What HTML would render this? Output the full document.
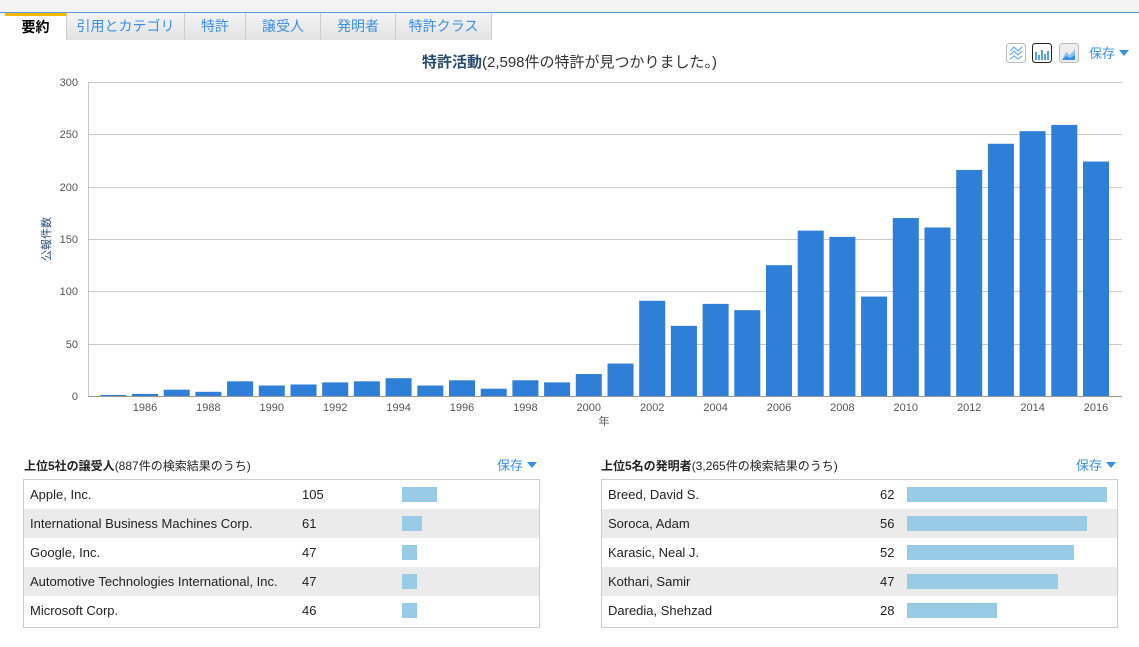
<!DOCTYPE html>
<html><head><meta charset="utf-8">
<style>
body{margin:0;width:1139px;height:647px;background:#fff;font-family:"Liberation Sans","Noto Sans CJK JP",sans-serif;position:relative;overflow:hidden}
.topband{position:absolute;left:0;top:0;width:1139px;height:12px;background:#f3f3f3;border-bottom:1px solid #5a9be0}
.tabs{position:absolute;left:5px;top:13px;height:27px;border-bottom:1px solid #ccc}
.tab{position:absolute;top:0;height:27px;line-height:26px;text-align:center;font-size:14px;color:#3a8ee6;background:linear-gradient(#f4f4f4,#e2e2e2);border-right:1px solid #ccc;box-sizing:border-box}
.tab.on{background:#fff;color:#000;font-weight:bold;border-top:3px solid #f5b800;line-height:22px}
.abs{position:absolute}
.title{left:0;width:1139px;top:51px;text-align:center;font-size:15px;color:#333}
.title b{color:#274b6d}
.save{font-size:13px;color:#3a8ee6}
.tri{display:inline-block;width:0;height:0;border-left:5px solid transparent;border-right:5px solid transparent;border-top:6px solid #3a8ee6;margin-left:4px;vertical-align:2px}
.box{position:absolute;border:1px solid #ccc;width:515px;top:479px;height:147px;font-size:13px;color:#222}
.row{height:29px;line-height:29px;position:relative}
.row.g{background:#ebebeb}
.row span{position:absolute}
.bar{position:absolute;top:7px;height:15px;background:#99cbe6}
.hd{font-size:12px;color:#222;top:457px}
.hd b{font-size:12px}
</style></head><body>
<div class="topband"></div>
<div class="tabs">
<div class="tab on" style="left:0;width:62px">要約</div>
<div class="tab" style="left:62px;width:118px">引用とカテゴリ</div>
<div class="tab" style="left:180px;width:61px">特許</div>
<div class="tab" style="left:241px;width:75px">譲受人</div>
<div class="tab" style="left:316px;width:75px">発明者</div>
<div class="tab" style="left:391px;width:96px">特許クラス</div>
</div>
<div class="abs title"><b>特許活動</b>(2,598件の特許が見つかりました。)</div>
<svg class="abs" style="left:1006px;top:43px" width="76" height="20">
<rect x="0.5" y="0.5" width="19" height="19" rx="3" fill="#fff" stroke="#bbb"/>
<path d="M4 8l4-4 4 4 4-4M4 12l4-4 4 4 4-4M4 16l4-3 4 3 4-3" stroke="#5aa0e8" fill="none"/>
<rect x="26.5" y="0.5" width="19" height="19" rx="3" fill="#fff" stroke="#222"/>
<path d="M30 17v-8M33 17v-5M36 17v-10M39 17v-6M42 17v-9" stroke="#5aa0e8" stroke-width="2"/>
<rect x="53.5" y="0.5" width="19" height="19" rx="3" fill="#eee" stroke="#bbb"/>
<path d="M56 17l4-8 4 3 5-6v11z" fill="#8cc0f0"/><path d="M56 17l4-4 4 2 5-3v5z" fill="#3a8ee6"/>
</svg>
<div class="abs save" style="left:1089px;top:43px">保存<span class="tri"></span></div>
<svg class="abs" style="left:0;top:70px" width="1139" height="370" id="ch">
<g stroke="#c8c8c8" stroke-width="1">
<line x1="88" x2="1122" y1="12.5" y2="12.5"/><line x1="88" x2="1122" y1="64.5" y2="64.5"/>
<line x1="88" x2="1122" y1="117.5" y2="117.5"/><line x1="88" x2="1122" y1="169.5" y2="169.5"/>
<line x1="88" x2="1122" y1="221.5" y2="221.5"/><line x1="88" x2="1122" y1="274.5" y2="274.5"/>
<line x1="88.5" x2="88.5" y1="12" y2="326"/>
</g>
<line x1="88" x2="1122" y1="326.5" y2="326.5" stroke="#999"/>
<g font-size="11" fill="#555" text-anchor="end">
<text x="78" y="16">300</text><text x="78" y="68">250</text><text x="78" y="121">200</text>
<text x="78" y="173">150</text><text x="78" y="225">100</text><text x="78" y="278">50</text><text x="78" y="330">0</text>
</g>
<text transform="translate(50,169) rotate(-90)" font-size="11" fill="#274b6d" text-anchor="middle">公報件数</text>
<text x="604" y="355" font-size="11" fill="#555" text-anchor="middle">年</text>
<g id="bars" fill="#2f7ed8"></g>
<g id="xl" font-size="11" fill="#555" text-anchor="middle"></g>
</svg>
<script>
var v=[1,2,6,4,14,10,11,13,14,17,10,15,7,15,13,21,31,91,67,88,82,125,158,152,95,170,161,216,241,253,259,224];
var b=document.getElementById('bars'),xl=document.getElementById('xl'),ns='http://www.w3.org/2000/svg';
for(var i=0;i<v.length;i++){var cx=113.3+i*31.7,h=v[i]*314/300;
var r=document.createElementNS(ns,'rect');r.setAttribute('x',cx-13);r.setAttribute('width',26);r.setAttribute('y',326-h);r.setAttribute('height',h);b.appendChild(r);
if((1985+i)%2==0){var t=document.createElementNS(ns,'text');t.setAttribute('x',cx);t.setAttribute('y',341);t.textContent=1985+i;xl.appendChild(t);}}
</script>
<div class="abs hd" style="left:24px"><b>上位5社の譲受人</b>(887件の検索結果のうち)</div>
<div class="abs save" style="left:497px;top:455px">保存<span class="tri"></span></div>
<div class="abs hd" style="left:601px"><b>上位5名の発明者</b>(3,265件の検索結果のうち)</div>
<div class="abs save" style="left:1076px;top:455px">保存<span class="tri"></span></div>
<div class="box" style="left:23px">
<div class="row"><span style="left:6px">Apple, Inc.</span><span style="left:278px">105</span><div class="bar" style="left:378px;width:35px"></div></div>
<div class="row g"><span style="left:6px">International Business Machines Corp.</span><span style="left:278px">61</span><div class="bar" style="left:378px;width:20px"></div></div>
<div class="row"><span style="left:6px">Google, Inc.</span><span style="left:278px">47</span><div class="bar" style="left:378px;width:15px"></div></div>
<div class="row g"><span style="left:6px">Automotive Technologies International, Inc.</span><span style="left:278px">47</span><div class="bar" style="left:378px;width:15px"></div></div>
<div class="row"><span style="left:6px">Microsoft Corp.</span><span style="left:278px">46</span><div class="bar" style="left:378px;width:15px"></div></div>
</div>
<div class="box" style="left:601px">
<div class="row"><span style="left:6px">Breed, David S.</span><span style="left:278px">62</span><div class="bar" style="left:305px;width:200px"></div></div>
<div class="row g"><span style="left:6px">Soroca, Adam</span><span style="left:278px">56</span><div class="bar" style="left:305px;width:180px"></div></div>
<div class="row"><span style="left:6px">Karasic, Neal J.</span><span style="left:278px">52</span><div class="bar" style="left:305px;width:167px"></div></div>
<div class="row g"><span style="left:6px">Kothari, Samir</span><span style="left:278px">47</span><div class="bar" style="left:305px;width:151px"></div></div>
<div class="row"><span style="left:6px">Daredia, Shehzad</span><span style="left:278px">28</span><div class="bar" style="left:305px;width:90px"></div></div>
</div>
</body></html>
